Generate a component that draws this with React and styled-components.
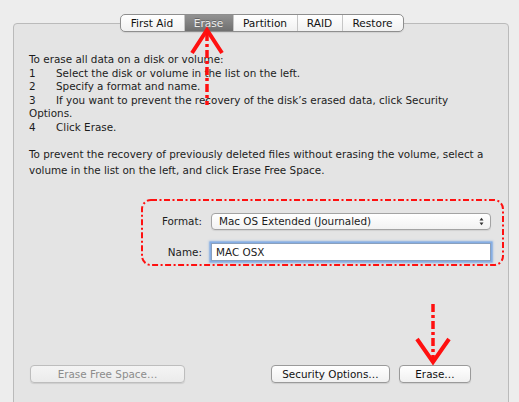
import React from "react";
import styled, { createGlobalStyle } from "styled-components";

const Global = createGlobalStyle`
  html, body { margin: 0; padding: 0; background: #ededed; }
  * { box-sizing: border-box; }
`;

const Root = styled.div`
  position: relative;
  width: 519px;
  height: 402px;
  overflow: hidden;
  background: #ededed;
  padding: 23px 10px 0 13px;
  font-family: "DejaVu Sans", "Noto Sans", sans-serif;
  font-size: 10.4px;
  color: #1c1c1c;
`;

const Panel = styled.div`
  height: 420px;
  border: 1px solid #bababa;
  border-radius: 4px;
  background: #e4e4e4;
  display: flex;
  flex-direction: column;
`;

const TabBar = styled.div`
  align-self: center;
  margin-top: -10px;
  margin-left: 1px;
  display: flex;
  height: 18px;
  border: 1px solid #8e8e8e;
  border-radius: 5px;
  overflow: hidden;
  background: linear-gradient(#ffffff, #f1f1f1);
  box-shadow: 0 1px 1px rgba(0, 0, 0, 0.08);
`;

const Tab = styled.div`
  width: ${(p) => p.$w}px;
  display: flex;
  align-items: center;
  justify-content: center;
  font-size: 10.6px;
  color: ${(p) => (p.$active ? "#ececec" : "#111")};
  background: ${(p) =>
    p.$active ? "linear-gradient(#929292, #6f6f6f)" : "transparent"};
  border-left: ${(p) => (p.$first ? "none" : "1px solid #c6c6c6")};
  text-shadow: ${(p) => (p.$active ? "0 -1px 0 rgba(0,0,0,0.25)" : "none")};
`;

const Instructions = styled.div`
  margin-top: 21px;
  padding-left: 15px;
  line-height: 13.5px;
  white-space: nowrap;
`;

const Line = styled.div``;

const Num = styled.span`
  display: inline-block;
  width: 27px;
`;

const Paragraph = styled.div`
  margin-top: 13px;
  padding-left: 15px;
  line-height: 15.7px;
  white-space: nowrap;
`;

const FormBox = styled.div`
  margin: 21px 0 0 128px;
  width: 362px;
  height: 65px;
  padding-top: 10px;
  display: grid;
  grid-template-columns: 60px 280px;
  column-gap: 9px;
  row-gap: 7px;
  align-items: center;
`;

const Label = styled.div`
  text-align: right;
  font-size: 10.4px;
`;

const Popup = styled.div`
  height: 17px;
  border: 1px solid #a3a3a3;
  border-radius: 4px;
  background: linear-gradient(#ffffff, #f2f2f2);
  display: flex;
  align-items: center;
  justify-content: space-between;
  padding: 0 6px 0 7px;
  box-shadow: 0 1px 1px rgba(0, 0, 0, 0.08);
`;

const Stepper = styled.svg`
  width: 5px;
  height: 9px;
`;

const Field = styled.div`
  height: 18px;
  border: 1px solid #8aa0bd;
  background: #fff;
  display: flex;
  align-items: center;
  padding-left: 4px;
  box-shadow: 0 0 0 1.5px #86aee4, 0 0 2px 2px rgba(110, 160, 225, 0.6);
`;

const ButtonRow = styled.div`
  margin-top: 101px;
  display: flex;
  padding: 0 37px 0 16px;
  gap: 9px;
`;

const Spacer = styled.div`
  flex: 1;
`;

const Button = styled.div`
  width: ${(p) => p.$w}px;
  height: 18px;
  border: 1px solid ${(p) => (p.$disabled ? "#bdbdbd" : "#9a9a9a")};
  border-radius: 4px;
  background: ${(p) =>
    p.$disabled
      ? "linear-gradient(#f4f4f4, #ebebeb)"
      : "linear-gradient(#ffffff, #f0f0f0)"};
  color: ${(p) => (p.$disabled ? "#8c8c8c" : "#111")};
  display: flex;
  align-items: center;
  justify-content: center;
  font-size: 10.4px;
  box-shadow: 0 1px 1px rgba(0, 0, 0, 0.1);
`;

const Overlay = styled.svg`
  position: absolute;
  left: 0;
  top: 0;
  width: 519px;
  height: 402px;
  pointer-events: none;
`;

const tabs = [
  { label: "First Aid", w: 63 },
  { label: "Erase", w: 49, active: true },
  { label: "Partition", w: 64 },
  { label: "RAID", w: 45 },
  { label: "Restore", w: 61 },
];

export default function App() {
  return (
    <>
      <Global />
      <Root>
        <Panel>
          <TabBar>
            {tabs.map((t, i) => (
              <Tab key={t.label} $w={t.w} $active={t.active} $first={i === 0}>
                {t.label}
              </Tab>
            ))}
          </TabBar>
          <Instructions>
            <Line>To erase all data on a disk or volume:</Line>
            <Line>
              <Num>1</Num>Select the disk or volume in the list on the left.
            </Line>
            <Line>
              <Num>2</Num>Specify a format and name.
            </Line>
            <Line>
              <Num>3</Num>If you want to prevent the recovery of the disk’s
              erased data, click Security
            </Line>
            <Line>Options.</Line>
            <Line>
              <Num>4</Num>Click Erase.
            </Line>
          </Instructions>
          <Paragraph>
            <Line>
              To prevent the recovery of previously deleted files without
              erasing the volume, select a
            </Line>
            <Line>volume in the list on the left, and click Erase Free Space.</Line>
          </Paragraph>
          <FormBox>
            <Label>Format:</Label>
            <Popup>
              <span>Mac OS Extended (Journaled)</span>
              <Stepper viewBox="0 0 5 9">
                <path d="M0.5 3.5 L2.5 0.8 L4.5 3.5 Z" fill="#333" />
                <path d="M0.5 5.5 L2.5 8.2 L4.5 5.5 Z" fill="#333" />
              </Stepper>
            </Popup>
            <Label>Name:</Label>
            <Field>MAC OSX</Field>
          </FormBox>
          <ButtonRow>
            <Button $w={155} $disabled>
              Erase Free Space…
            </Button>
            <Spacer />
            <Button $w={119}>Security Options…</Button>
            <Button $w={72}>Erase…</Button>
          </ButtonRow>
        </Panel>
        <Overlay viewBox="0 0 519 402">
          <rect
            x="142"
            y="200"
            width="361"
            height="65"
            rx="9"
            fill="none"
            stroke="#ff1010"
            strokeWidth="2"
            strokeDasharray="6 2.5 2 2.5"
          />
          <line
            x1="207"
            y1="33"
            x2="207"
            y2="105"
            stroke="#ff1010"
            strokeWidth="3.5"
            strokeDasharray="8 3 3 3"
          />
          <polyline
            points="192,53 207,30 222,53"
            fill="none"
            stroke="#ff1010"
            strokeWidth="4"
            strokeLinejoin="miter"
          />
          <line
            x1="433"
            y1="304"
            x2="433"
            y2="360"
            stroke="#ff1010"
            strokeWidth="3.5"
            strokeDasharray="8 3 3 3"
          />
          <polyline
            points="417,339 433,362 449,339"
            fill="none"
            stroke="#ff1010"
            strokeWidth="4"
            strokeLinejoin="miter"
          />
        </Overlay>
      </Root>
    </>
  );
}
